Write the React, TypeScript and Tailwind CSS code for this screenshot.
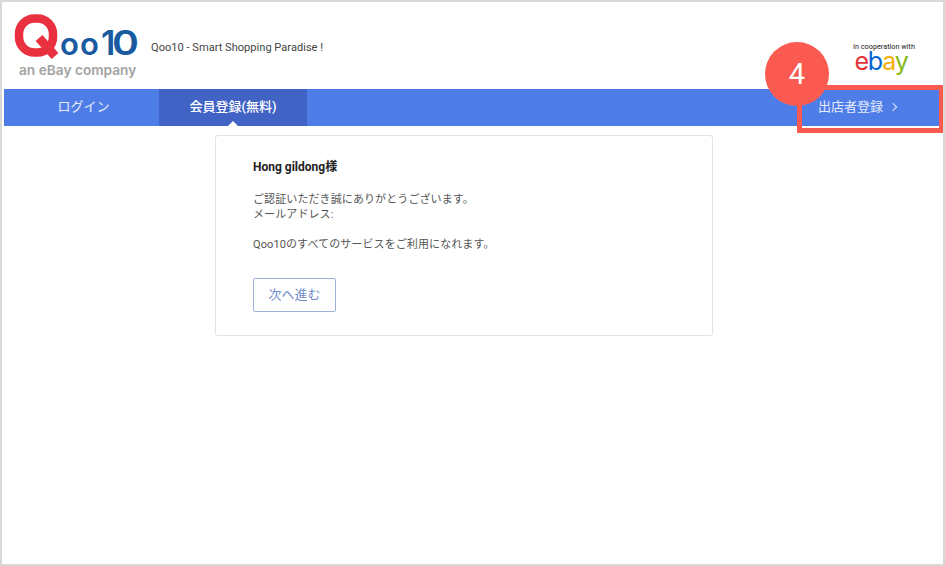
import React from "react";

function QLogo() {
  return (
    <svg width="130" height="56" viewBox="0 0 130 56" className="mb-[-8px] block">
      <rect x="6" y="6.5" width="34" height="34" rx="15.5" fill="none" stroke="#e8303f" strokeWidth="8.5" />
      <path d="M26 26 L42 44" stroke="#e8303f" strokeWidth="9" fill="none" />
      <text x="47" y="43" fontFamily="Inter, sans-serif" fontWeight="600" fontSize="31" letterSpacing="1" fill="#1a5aa0">oo</text>
      <text x="88" y="43" fontFamily="Inter, sans-serif" fontWeight="600" fontSize="34" fill="#1a5aa0">1</text>
      <text transform="translate(99 43) scale(1.2 1)" fontFamily="Inter, sans-serif" fontWeight="600" fontSize="34" fill="#1a5aa0">0</text>
    </svg>
  );
}

export default function App() {
  return (
    <div className="relative h-[566px] w-[945px] overflow-hidden border-2 border-[#d8d8d8] bg-white font-['Roboto','Noto_Sans_CJK_JP',sans-serif] text-[#333]">
      <header className="flex h-[87px] items-start justify-between pl-[11px] pr-[28px]">
        <div className="flex items-start">
          <div className="flex w-[125px] flex-col pt-[10px]">
            <QLogo />
            <span className="ml-[6px] mt-[2px] whitespace-nowrap font-['Inter',sans-serif] text-[13.7px] font-semibold leading-[16px] text-[#a3a3a3]">an eBay company</span>
          </div>
          <span className="ml-[13px] mt-[39px] text-[11.1px] leading-[13px] text-[#444]">Qoo10 - Smart Shopping Paradise !</span>
        </div>
        <div className="flex flex-col items-center pt-[40px]">
          <span className="text-[7.3px] leading-[9px] text-[#222]">In cooperation with</span>
          <span className="ml-[-6px] font-['Inter',sans-serif] text-[25px] font-normal leading-[20px] tracking-[-1.2px]">
            <span className="text-[#e53238]">e</span>
            <span className="text-[#0064d2]">b</span>
            <span className="text-[#f5af02]">a</span>
            <span className="text-[#86b817]">y</span>
          </span>
        </div>
      </header>
      <nav className="mx-[2px] flex h-[37px] items-stretch justify-between bg-[#4f7de8] text-[13px] leading-[17px] text-white">
        <div className="flex">
          <a className="flex w-[155px] items-center justify-center pb-[2px] pl-[4px] text-[#e6ecfb]">ログイン</a>
          <a className="relative flex w-[148px] items-center justify-center bg-[#4063c5] pb-[2px] font-medium">
            会員登録(無料)
            <span className="absolute bottom-0 left-1/2 h-0 w-0 -translate-x-1/2 border-x-[5px] border-b-[5px] border-x-transparent border-b-white" />
          </a>
        </div>
        <a className="flex w-[137px] items-center gap-[7px] pb-[2px] pl-[14px] text-[#e6ecfb]">
          出店者登録
          <span className="h-[6px] w-[6px] rotate-45 border-r border-t border-[#dbe4fa]" />
        </a>
      </nav>
      <main className="ml-[213px] mt-[9px] h-[201px] w-[498px] rounded-[3px] border border-[#e3e3e3] pl-[37px] pt-[24px]">
        <h1 className="text-[12px] font-bold leading-[14px] text-[#222]">Hong gildong様</h1>
        <p className="mt-[18px] text-[11px] leading-[15px] tracking-[0.1px] text-[#555]">
          ご認証いただき誠にありがとうございます。
          <br />
          メールアドレス:
        </p>
        <p className="mt-[15px] text-[11px] leading-[15px] tracking-[0.1px] text-[#555]">Qoo10のすべてのサービスをご利用になれます。</p>
        <button className="mt-[26px] flex h-[34px] w-[83px] items-center justify-center rounded-[2px] border border-[#9db0d8] text-[13px] text-[#6f8bc9]">次へ進む</button>
      </main>
      <div className="absolute left-[795px] top-[83px] h-[48px] w-[147px] border-[5px] border-[#fa5a50]" />
      <div className="absolute left-[763px] top-[40px] flex h-[64px] w-[64px] items-center justify-center rounded-full bg-[#fa5a50] text-[29px] leading-none text-white">4</div>
    </div>
  );
}
